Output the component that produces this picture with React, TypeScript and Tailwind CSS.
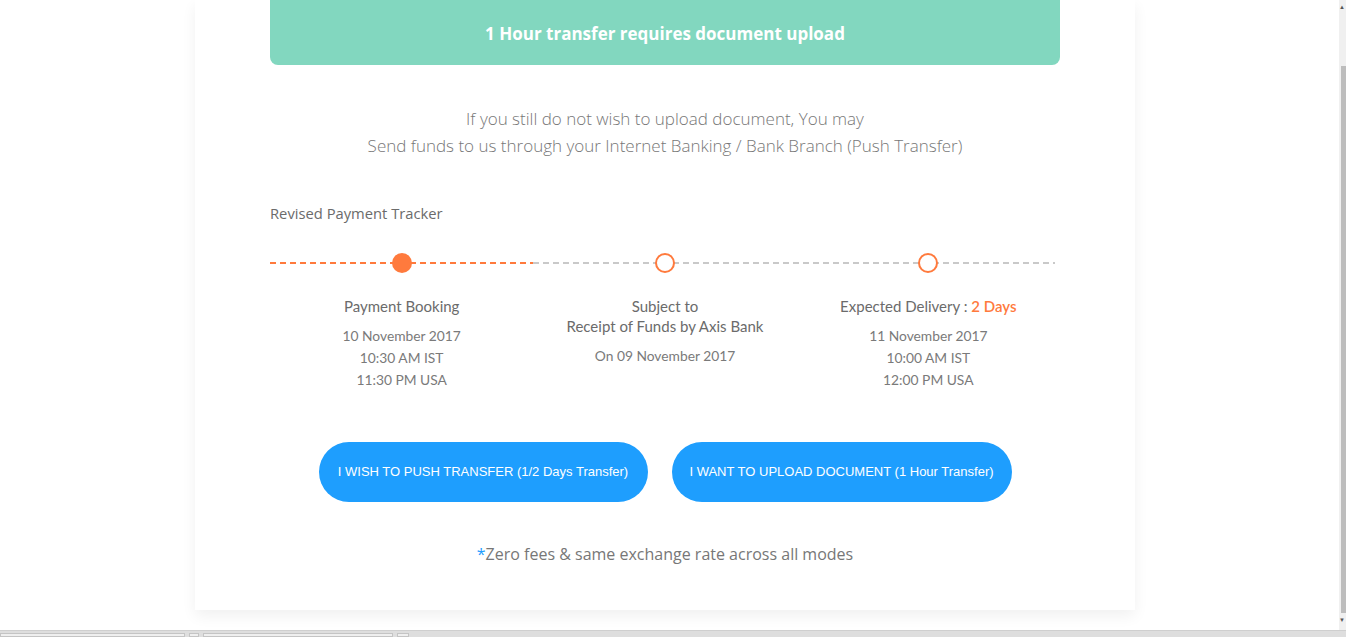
import { ReactNode } from 'react';

const ORANGE = 'text-[#ff7a3d]';

interface Step {
  title: ReactNode;
  lines: string[];
  done?: boolean;
}

const steps: Step[] = [
  {
    title: 'Payment Booking',
    lines: ['10 November 2017', '10:30 AM IST', '11:30 PM USA'],
    done: true,
  },
  {
    title: (
      <>
        Subject to
        <br />
        Receipt of Funds by Axis Bank
      </>
    ),
    lines: ['On 09 November 2017'],
  },
  {
    title: (
      <>
        Expected Delivery : <span className={`${ORANGE} font-semibold`}>2 Days</span>
      </>
    ),
    lines: ['11 November 2017', '10:00 AM IST', '12:00 PM USA'],
  },
];

function Tracker() {
  return (
    <div className="relative">
      {/* dashed rail behind the nodes */}
      <svg className="absolute left-0 top-[9px] h-[2px] w-full" preserveAspectRatio="none">
        <line x1="0" y1="1" x2="263" y2="1" stroke="#ff7a3d" strokeWidth="2" strokeDasharray="6 4" />
        <line x1="263" y1="1" x2="785" y2="1" stroke="#c9c9c9" strokeWidth="2" strokeDasharray="6 4" />
      </svg>
      <div className="relative grid grid-cols-3">
        {steps.map((s, i) => (
          <div key={i} className="flex flex-col items-center text-center">
            <div
              className={
                s.done
                  ? 'h-5 w-5 rounded-full bg-[#ff7a3d]'
                  : 'h-5 w-5 rounded-full border-2 border-[#ff7a3d] bg-white'
              }
            />
            <div className="mt-[23px] text-[15px] leading-5 text-[#6b6b6b]">{s.title}</div>
            <div className="mt-[9px] text-[13.8px] leading-[22px] text-[#7a7a7a]">
              {s.lines.map((l) => (
                <div key={l}>{l}</div>
              ))}
            </div>
          </div>
        ))}
      </div>
    </div>
  );
}

export default function App() {
  return (
    <div className="flex h-[637px] w-[1346px] flex-col overflow-hidden bg-white font-['Lato',sans-serif]">
      <div className="flex flex-1">
        <div className="flex-1 pl-[195px]">
          <div className="w-[940px] bg-white px-[75px] pb-[44px] shadow-[0_6px_14px_rgba(0,0,0,0.06)]">
            <div className="flex h-[65px] items-center justify-center rounded-b-lg bg-[#82d7bf] pt-[2px] font-['Open_Sans',sans-serif] text-[17px] font-bold text-white">
              1 Hour transfer requires document upload
            </div>

            <p className="mt-10 text-center font-['Open_Sans',sans-serif] text-[17px] font-light leading-[27px] text-[#777]">
              If you still do not wish to upload document, You may
              <br />
              Send funds to us through your Internet Banking / Bank Branch (Push Transfer)
            </p>

            <div className="mt-[44px] font-['Open_Sans',sans-serif] text-[14.75px] leading-5 text-[#6b6b6b]">
              Revised Payment Tracker
            </div>

            <div className="mt-[30px]">
              <Tracker />
            </div>

            <div className="mt-[51px] flex justify-center gap-6 font-['Liberation_Sans',sans-serif] text-[13px] text-white">
              <button className="h-[60px] w-[329px] rounded-full bg-[#1e9efe]">
                I WISH TO PUSH TRANSFER (1/2 Days Transfer)
              </button>
              <button className="h-[60px] w-[340px] rounded-full bg-[#1e9efe]">
                I WANT TO UPLOAD DOCUMENT (1 Hour Transfer)
              </button>
            </div>

            <p className="mt-10 text-center font-['Open_Sans',sans-serif] text-[16px] leading-6 text-[#777]">
              <span className="text-[#1e9efe]">*</span>Zero fees &amp; same exchange rate across all modes
            </p>
          </div>
        </div>

        {/* scrollbar */}
        <div className="flex w-[7px] flex-col bg-[#f0f0f0]">
          <div className="h-[66px] text-[6px] leading-[14px] text-[#555]">▲</div>
          <div className="ml-[2px] h-[547px] bg-[#bdbdbd]" />
          <div className="flex-1 text-[6px] leading-[14px] text-[#555]">▼</div>
        </div>
      </div>

      {/* taskbar strip */}
      <div className="flex h-[7px] gap-[4px] border-t border-[#cfcfcf] bg-[#dedede] pt-[2px]">
        <div className="w-[185px] border border-[#c4c4c4] bg-[#efefef]" />
        <div className="w-[10px] border border-[#c4c4c4] bg-[#efefef]" />
        <div className="w-[190px] border border-[#c4c4c4] bg-[#efefef]" />
        <div className="w-[12px] border border-[#c4c4c4] bg-[#efefef]" />
      </div>
    </div>
  );
}
